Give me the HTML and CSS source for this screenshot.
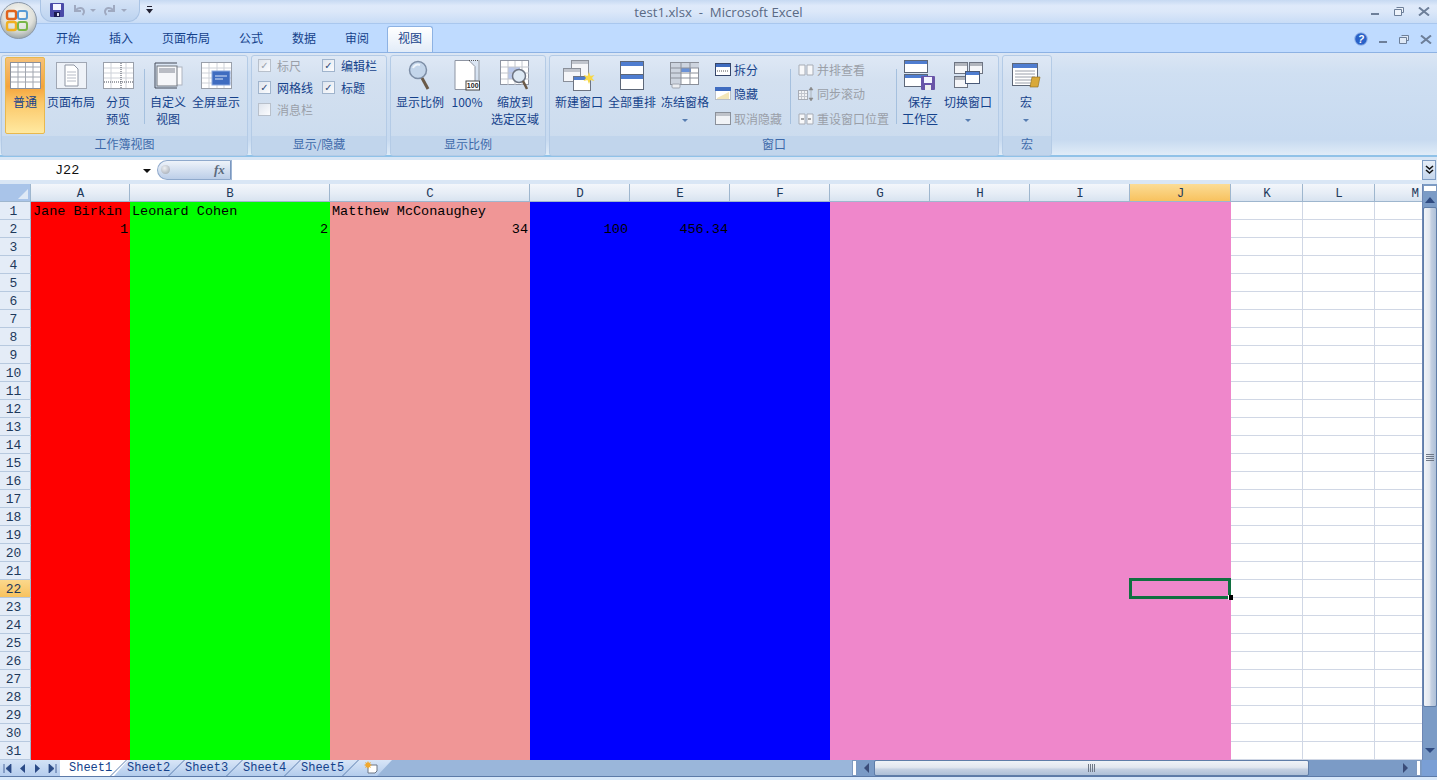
FILE: index.html
```html
<!DOCTYPE html>
<html>
  <head>
    <meta charset="utf-8" />
    <title>test1.xlsx - Microsoft Excel</title>
    <link rel="stylesheet" href="styles.css">
  </head>
  <body>
    <!-- office orb sits over the title bar and the tab row -->
    <div class="orb">
      <svg width="37" height="37" viewBox="0 0 37 37">
        <defs>
          <radialGradient id="orbfill" cx="50%" cy="35%" r="70%">
            <stop offset="0" stop-color="#fbfbf8" />
            <stop offset="0.6" stop-color="#dfe0da" />
            <stop offset="1" stop-color="#8f9a9c" />
          </radialGradient>
        </defs>
        <circle cx="18.5" cy="18.5" r="18" fill="url(#orbfill)" stroke="#8a97a8" />
        <rect x="7" y="9" width="9" height="8" rx="2" fill="none" stroke="#e0641c" stroke-width="2.4" />
        <rect x="18" y="9" width="9" height="8" rx="2" fill="none" stroke="#5a9bd5" stroke-width="2" />
        <rect x="7" y="20" width="9" height="8" rx="2" fill="none" stroke="#f0b020" stroke-width="2.4" />
        <rect x="18" y="20" width="9" height="8" rx="2" fill="none" stroke="#7ab648" stroke-width="2" />
      </svg>
    </div>

    <div class="titlebar">
      <div class="qat">
        <svg width="14" height="14" viewBox="0 0 14 14">
          <rect width="14" height="14" rx="1" fill="#4a4aa8" />
          <rect x="3" y="1" width="8" height="6" fill="#f4f4ff" />
          <rect x="4" y="9" width="6" height="5" fill="#1c1c50" />
          <rect x="7" y="10" width="2" height="3" fill="#dfe0ee" />
        </svg>
        <svg class="undo" width="14" height="14" viewBox="0 0 14 14">
          <path d="M3 2v6h6M3.5 7.5C6 4 11 4 12 8c.3 1.500-.5 3-1.500 4" fill="none" stroke="#9fa9c0" stroke-width="2" />
        </svg>
        <span class="qat-caret"></span>
        <svg class="redo" width="14" height="14" viewBox="0 0 14 14">
          <path d="M11 2v6H5M10.500 7.500C8 4 3 4 2 8c-.3 1.500.5 3 1.500 4" fill="none" stroke="#9fa9c0" stroke-width="2" />
        </svg>
        <span class="qat-caret"></span>
      </div>
      <svg class="qat-more" width="7" height="8" viewBox="0 0 7 8">
        <path d="M1 .5h5" stroke="#223" />
        <path d="M0 3h7L3.500 7.500z" fill="#223" />
      </svg>
      <div class="doc-title">test1.xlsx&nbsp; - &nbsp;Microsoft Excel</div>
      <div class="winctl">
        <svg width="9" height="9" viewBox="0 0 9 9"><rect y="6" width="8" height="2" fill="#6d7f99" /></svg>
        <svg width="10" height="9" viewBox="0 0 10 9"><path d="M2.500 .5h7v5h-2M.5 2.500h7v6h-7z" fill="#eef3fa" stroke="#6d7f99" /></svg>
        <svg width="12" height="9" viewBox="0 0 12 9"><path d="M1 .5l10 8M11 .5l-10 8" stroke="#6d7f99" stroke-width="2" /></svg>
      </div>
    </div>

    <div class="tabrow">
      <div class="tab">开始</div>
      <div class="tab">插入</div>
      <div class="tab">页面布局</div>
      <div class="tab">公式</div>
      <div class="tab">数据</div>
      <div class="tab">审阅</div>
      <div class="tab active">视图</div>
      <div class="docctl">
        <svg width="14" height="14" viewBox="0 0 14 14">
          <circle cx="7" cy="7" r="6.300" fill="#2a62c8" stroke="#9dbcec" />
          <text x="7" y="10.500" class="help-mark">?</text>
        </svg>
        <svg width="9" height="9" viewBox="0 0 9 9"><rect y="6" width="8" height="2" fill="#6d7f99" /></svg>
        <svg width="10" height="9" viewBox="0 0 10 9"><path d="M2.500 .5h7v5h-2M.5 2.500h7v6h-7z" fill="#dfe9f6" stroke="#6d7f99" /></svg>
        <svg width="12" height="9" viewBox="0 0 12 9"><path d="M1 .5l10 8M11 .5l-10 8" stroke="#6d7f99" stroke-width="2" /></svg>
      </div>
    </div>

    <div class="ribbon">
      <!-- workbook views -->
      <div class="group g-views">
        <div class="group-body">
          <div class="lg w40 on">
            <svg class="ico" width="31" height="27" viewBox="0 0 31 27">
              <rect x=".5" y=".5" width="30" height="26" fill="#fff" stroke="#8a8f99" />
              <path d="M1 5h29M1 10h29M1 15h29M1 20h29M8 1v25M15.500 1v25M23 1v25" stroke="#a2a7b0" />
            </svg>
            <span class="lbl">普通</span>
          </div>
          <div class="lg w52">
            <svg class="ico" width="31" height="27" viewBox="0 0 31 27">
              <rect x=".5" y=".5" width="30" height="26" fill="#eef2f8" stroke="#a0a7b4" />
              <path d="M9 3h9l4 4v17H9z" fill="#fff" stroke="#8e95a3" />
              <path d="M11 10h9M11 13h9M11 16h9M11 19h9" stroke="#b6bbc6" />
            </svg>
            <span class="lbl">页面布局</span>
          </div>
          <div class="lg w42">
            <svg class="ico" width="31" height="27" viewBox="0 0 31 27">
              <rect x=".5" y=".5" width="30" height="26" fill="#fff" stroke="#9aa0ab" />
              <path d="M1 6h29M1 11h29M1 16h29M8 1v25M23 1v25" stroke="#ced2d9" />
              <path d="M18 1v25M1 20h29" stroke="#444a58" stroke-dasharray="1 1" />
            </svg>
            <span class="lbl">分页<br />预览</span>
          </div>
          <div class="sep"></div>
          <div class="lg w44">
            <svg class="ico" width="31" height="27" viewBox="0 0 31 27">
              <path d="M2 1h22M2 26h22M2 1v25" stroke="#444a58" fill="none" />
              <rect x="20" y="5" width="9" height="18" fill="#fbfbfd" stroke="#aeb4bf" />
              <rect x="4" y="4" width="20" height="20" fill="#f5f6f9" stroke="#70767f" />
              <rect x="6" y="6" width="16" height="5" fill="#b9bcc4" />
            </svg>
            <span class="lbl">自定义<br />视图</span>
          </div>
          <div class="lg w52">
            <svg class="ico" width="31" height="27" viewBox="0 0 31 27">
              <rect x=".5" y=".5" width="30" height="26" fill="#fff" stroke="#9aa0ab" />
              <path d="M1 6h29M1 11h29M1 16h29M1 21h29M8 1v25M16 1v25M23 1v25" stroke="#ced2d9" />
              <rect x="11" y="9" width="18" height="14" fill="#3f6cc0" stroke="#8aa7de" />
              <path d="M14 14h12M14 17h8" stroke="#dbe6fa" />
            </svg>
            <span class="lbl">全屏显示</span>
          </div>
        </div>
        <div class="group-name">工作簿视图</div>
      </div>

      <!-- show / hide -->
      <div class="group g-show">
        <div class="group-body checks">
          <div class="check-col">
            <div class="check off"><span class="box tick">✓</span>标尺</div>
            <div class="check"><span class="box tick">✓</span>网格线</div>
            <div class="check off"><span class="box"></span>消息栏</div>
          </div>
          <div class="check-col">
            <div class="check"><span class="box tick">✓</span>编辑栏</div>
            <div class="check"><span class="box tick">✓</span>标题</div>
          </div>
        </div>
        <div class="group-name">显示/隐藏</div>
      </div>

      <!-- zoom -->
      <div class="group g-zoom">
        <div class="group-body">
          <div class="lg w50">
            <svg class="ico" width="24" height="31" viewBox="0 0 24 31">
              <circle cx="10" cy="10" r="8.500" fill="#c3d5ea" stroke="#7d8ea6" stroke-width="1.500" />
              <path d="M5 8c1-3 4-4 7-3" stroke="#eef4fb" stroke-width="2" fill="none" />
              <path d="M14 18l6 11" stroke="#6b5a48" stroke-width="3" />
            </svg>
            <span class="lbl">显示比例</span>
          </div>
          <div class="lg w44">
            <svg class="ico" width="26" height="31" viewBox="0 0 26 31">
              <path d="M1 .5h14l6 6v23H1z" fill="#fff" stroke="#8e95a3" />
              <path d="M15 .5h10v20" fill="none" stroke="#555" stroke-dasharray="1 1" />
              <rect x="12" y="21" width="13.500" height="9" fill="#fff" stroke="#444" />
              <text x="18.700" y="28.300" class="ico-num">100</text>
            </svg>
            <span class="lbl">100%</span>
          </div>
          <div class="lg w52">
            <svg class="ico" width="30" height="31" viewBox="0 0 30 31">
              <rect x=".5" y=".5" width="28" height="24" fill="#fff" stroke="#8e95a3" />
              <rect x="8" y="7" width="12" height="12" fill="#b8c8ec" />
              <path d="M1 7h28M1 13h28M1 19h28M8 1v24M15 1v24M22 1v24" stroke="#c2c6ce" />
              <circle cx="19" cy="16" r="6.500" fill="#dce8f4" stroke="#6d7482" stroke-width="1.500" />
              <path d="M23 21l4 8" stroke="#6b5a48" stroke-width="2.500" />
            </svg>
            <span class="lbl">缩放到<br />选定区域</span>
          </div>
        </div>
        <div class="group-name">显示比例</div>
      </div>

      <!-- window -->
      <div class="group g-window">
        <div class="group-body">
          <div class="lg w52">
            <svg class="ico" width="32" height="31" viewBox="0 0 32 31">
              <rect x="8.500" y=".5" width="17" height="18" fill="#f5f6f9" stroke="#8a8f99" />
              <rect x="9" y="1" width="16" height="3" fill="#c1c5cd" />
              <rect x=".5" y="8.500" width="17" height="13" fill="#f5f6f9" stroke="#8a8f99" />
              <rect x="1" y="9" width="16" height="3" fill="#c1c5cd" />
              <rect x="10.500" y="16.500" width="17" height="14" fill="#fff" stroke="#6d7482" />
              <rect x="11" y="17" width="16" height="3" fill="#4f7dd0" />
              <path d="M26 12l1.500 4 4-1-2.500 3 2.500 3-4-1-1.500 4-1.500-4-4 1 2.500-3-2.500-3 4 1z" fill="#f7d84a" />
            </svg>
            <span class="lbl">新建窗口</span>
          </div>
          <div class="lg w54">
            <svg class="ico" width="24" height="29" viewBox="0 0 24 29">
              <rect x=".5" y=".5" width="23" height="28" fill="#fff" stroke="#5d6778" />
              <rect x="1" y="1" width="22" height="4" fill="#4f7dd0" />
              <rect x="1" y="14" width="22" height="4" fill="#4f7dd0" />
              <path d="M0 13.500h24" stroke="#5d6778" />
            </svg>
            <span class="lbl">全部重排</span>
          </div>
          <div class="lg w52">
            <svg class="ico" width="30" height="27" viewBox="0 0 30 27">
              <rect x=".5" y=".5" width="28" height="22" fill="#fff" stroke="#8a8f99" />
              <rect x="1" y="1" width="10" height="21" fill="#cdd4df" />
              <rect x="11" y="1" width="18" height="5" fill="#cdd4df" />
              <rect x="11" y="6" width="10" height="4" fill="#6a92d8" />
              <path d="M1 6h28M1 11h28M1 16h28M11 1v21M20 1v21" stroke="#8a8f99" />
              <rect x="2" y="22" width="8" height="4" rx="1" fill="#eceef2" stroke="#a0a6b0" />
            </svg>
            <span class="lbl">冻结窗格</span>
            <span class="caret-row"><span class="caret"></span></span>
          </div>
          <div class="small-col first">
            <div class="small">
              <svg width="16" height="13" viewBox="0 0 16 13">
                <rect x=".5" y=".5" width="15" height="12" fill="#fff" stroke="#36466a" />
                <rect x="1" y="1" width="14" height="3" fill="#3f6cc0" />
                <path d="M2 8h12" stroke="#555" stroke-dasharray="1 1" />
              </svg>
              <span>拆分</span>
            </div>
            <div class="small">
              <svg width="16" height="13" viewBox="0 0 16 13">
                <rect x=".5" y=".5" width="15" height="12" fill="#fff" stroke="#8a8f99" stroke-dasharray="1 1" />
                <rect x="0" y="0" width="16" height="4" fill="#3f6cc0" />
                <path d="M2 11L14 5v7H2z" fill="#f3e6b8" />
              </svg>
              <span>隐藏</span>
            </div>
            <div class="small off">
              <svg width="16" height="13" viewBox="0 0 16 13">
                <rect x=".5" y=".5" width="15" height="12" fill="#f1f3f6" stroke="#8a909a" />
                <rect x="1" y="1" width="14" height="3" fill="#bfc3ca" />
              </svg>
              <span>取消隐藏</span>
            </div>
          </div>
          <div class="sep wide"></div>
          <div class="small-col">
            <div class="small off">
              <svg width="16" height="13" viewBox="0 0 16 13">
                <path d="M1 2h6v10H1zM9 2h6v10H9z" fill="#f7f8fa" stroke="#a7acb5" />
              </svg>
              <span>并排查看</span>
            </div>
            <div class="small off">
              <svg width="16" height="14" viewBox="0 0 16 14">
                <rect x=".5" y="3.500" width="9" height="9" fill="#f1f3f6" stroke="#a7acb5" />
                <path d="M3.500 4v8M6.500 4v8M1 6.500h8M1 9.500h8" stroke="#c2c6ce" />
                <path d="M13 0l2 3h-4zM13 14l2-3h-4zM13 3v8" fill="#888" stroke="#888" stroke-width=".5" />
              </svg>
              <span>同步滚动</span>
            </div>
            <div class="small off">
              <svg width="16" height="13" viewBox="0 0 16 13">
                <path d="M1 2h6v10H1zM9 2h6v10H9z" fill="#f7f8fa" stroke="#a7acb5" />
                <path d="M3 7h3M10 7h3" stroke="#555" />
              </svg>
              <span>重设窗口位置</span>
            </div>
          </div>
          <div class="sep wide"></div>
          <div class="lg w46">
            <svg class="ico" width="32" height="31" viewBox="0 0 32 31">
              <rect x=".5" y=".5" width="23" height="12" fill="#fff" stroke="#5d6778" />
              <rect x="1" y="1" width="22" height="3" fill="#4f7dd0" />
              <rect x=".5" y="14.500" width="23" height="12" fill="#fff" stroke="#5d6778" />
              <rect x="1" y="15" width="22" height="3" fill="#4f7dd0" />
              <rect x="17" y="16" width="14" height="14" rx="1" fill="#6a55a8" />
              <rect x="20" y="17" width="8" height="6" fill="#f4f4ff" />
              <rect x="21" y="25" width="6" height="5" fill="#eee" />
            </svg>
            <span class="lbl">保存<br />工作区</span>
          </div>
          <div class="lg w50">
            <svg class="ico" width="29" height="27" viewBox="0 0 29 27">
              <rect x=".5" y=".5" width="13" height="11" fill="#f5f6f9" stroke="#6d7482" />
              <rect x="1" y="1" width="12" height="3" fill="#b1b5bd" />
              <rect x="15.500" y=".5" width="13" height="11" fill="#f5f6f9" stroke="#6d7482" />
              <rect x="16" y="1" width="12" height="3" fill="#b1b5bd" />
              <rect x=".5" y="14.500" width="13" height="11" fill="#f5f6f9" stroke="#6d7482" />
              <rect x="1" y="15" width="12" height="3" fill="#b1b5bd" />
              <rect x="11.500" y="9.500" width="14" height="12" fill="#fff" stroke="#4a5a78" />
              <rect x="12" y="10" width="13" height="3" fill="#4f7dd0" />
            </svg>
            <span class="lbl">切换窗口</span>
            <span class="caret-row"><span class="caret"></span></span>
          </div>
        </div>
        <div class="group-name">窗口</div>
      </div>

      <!-- macros -->
      <div class="group g-macro">
        <div class="group-body">
          <div class="lg w46">
            <svg class="ico macro" width="29" height="25" viewBox="0 0 29 25">
              <rect x=".5" y=".5" width="25" height="22" fill="#fff" stroke="#5d6778" />
              <rect x="1" y="1" width="24" height="4" fill="#4f7dd0" />
              <path d="M3 8h20M3 11h20M3 14h20M3 17h20M3 20h18" stroke="#9aa0ab" />
              <path d="M20 14h8l-2 10h-8z" fill="#d9a93a" stroke="#8a6a1c" stroke-width=".6" />
            </svg>
            <span class="lbl">宏</span>
            <span class="caret-row"><span class="caret"></span></span>
          </div>
        </div>
        <div class="group-name">宏</div>
      </div>
    </div>

    <div class="formula-bar">
      <div class="namebox">J22<span class="name-caret"></span></div>
      <div class="fx-pill">
        <span class="fx-knob"></span>
        <span class="fx">fx</span>
      </div>
      <div class="formula-input"></div>
      <div class="formula-more">
        <svg width="9" height="10" viewBox="0 0 9 10">
          <path d="M1 1l3.500 3L8 1M1 5l3.500 3L8 5" fill="none" stroke="#111" stroke-width="1.600" />
        </svg>
      </div>
    </div>

    <div class="main">
      <div class="sheet">
        <div class="row-heads">
          <div class="corner"></div>
          <div class="rh">1</div><div class="rh">2</div><div class="rh">3</div><div class="rh">4</div>
          <div class="rh">5</div><div class="rh">6</div><div class="rh">7</div><div class="rh">8</div>
          <div class="rh">9</div><div class="rh">10</div><div class="rh">11</div><div class="rh">12</div>
          <div class="rh">13</div><div class="rh">14</div><div class="rh">15</div><div class="rh">16</div>
          <div class="rh">17</div><div class="rh">18</div><div class="rh">19</div><div class="rh">20</div>
          <div class="rh">21</div><div class="rh sel">22</div><div class="rh">23</div><div class="rh">24</div>
          <div class="rh">25</div><div class="rh">26</div><div class="rh">27</div><div class="rh">28</div>
          <div class="rh">29</div><div class="rh">30</div><div class="rh">31</div>
        </div>
        <div class="col col-a red">
          <div class="ch">A</div>
          <div class="cell">Jane Birkin</div>
          <div class="cell num">1</div>
        </div>
        <div class="col col-wide green">
          <div class="ch">B</div>
          <div class="cell">Leonard Cohen</div>
          <div class="cell num">2</div>
        </div>
        <div class="col col-wide salmon">
          <div class="ch">C</div>
          <div class="cell">Matthew McConaughey</div>
          <div class="cell num">34</div>
        </div>
        <div class="col blue">
          <div class="ch">D</div>
          <div class="cell"></div>
          <div class="cell num">100</div>
        </div>
        <div class="col blue">
          <div class="ch">E</div>
          <div class="cell"></div>
          <div class="cell num">456.34</div>
        </div>
        <div class="col blue">
          <div class="ch">F</div>
        </div>
        <div class="col pink"><div class="ch">G</div></div>
        <div class="col pink"><div class="ch">H</div></div>
        <div class="col pink"><div class="ch">I</div></div>
        <div class="col col-j pink"><div class="ch sel">J</div></div>
        <div class="col col-k blank"><div class="ch">K</div></div>
        <div class="col col-k blank"><div class="ch">L</div></div>
        <div class="col col-m blank"><div class="ch">M</div></div>
        <!-- selected cell J22 -->
        <div class="selection"><span class="handle"></span></div>
      </div>
      <div class="vscroll">
        <div class="v-split"></div>
        <div class="v-up"><span class="tri-up"></span></div>
        <div class="v-thumb"><span class="grip"></span></div>
        <div class="v-track"><span class="tri-down"></span></div>
      </div>
    </div>

    <div class="bottom">
      <div class="tab-nav">
        <svg width="9" height="9" viewBox="0 0 9 9"><path d="M1 0v9M8 0v9L3 4.500z" fill="#2b4a86" stroke="#2b4a86" stroke-width=".8" /></svg>
        <svg width="6" height="9" viewBox="0 0 6 9"><path d="M5 0v9L0 4.500z" fill="#2b4a86" /></svg>
        <svg width="6" height="9" viewBox="0 0 6 9"><path d="M1 0v9l5-4.500z" fill="#2b4a86" /></svg>
        <svg width="9" height="9" viewBox="0 0 9 9"><path d="M8 0v9M1 0v9l5-4.500z" fill="#2b4a86" stroke="#2b4a86" stroke-width=".8" /></svg>
      </div>
      <div class="sheet-tabs">
        <div class="stab current">Sheet1</div>
        <div class="stab">Sheet2</div>
        <div class="stab">Sheet3</div>
        <div class="stab">Sheet4</div>
        <div class="stab">Sheet5</div>
        <div class="stab new">
          <svg width="14" height="13" viewBox="0 0 14 13">
            <path d="M4 4h9v6l-2 2H4z" fill="#fff" stroke="#6c7686" />
            <path d="M4 0l1 2 2-1-1 2 2 1-2 1 1 2-2-1-1 2-1-2-2 1 1-2-2-1 2-1-1-2 2 1z" fill="#f0a830" />
          </svg>
        </div>
      </div>
      <div class="h-gap"></div>
      <div class="h-scroll">
        <span class="h-split"></span>
        <span class="h-btn"><span class="tri-left"></span></span>
        <span class="h-thumb"><span class="grip-h"></span></span>
        <span class="h-rest"><span class="tri-right"></span><span class="h-split right"></span></span>
      </div>
      <div class="h-corner"></div>
    </div>
    <div class="statusbar"></div>
  </body>
</html>
```

FILE: styles.css
```css
html,
body {
  margin: 0;
  padding: 0;
  width: 1437px;
  height: 780px;
  overflow: hidden;
  background: #bfdbff;
  font-family: "Noto Sans CJK SC", "Liberation Sans", sans-serif;
  font-size: 12px;
}

.orb {
  position: absolute;
  left: 0;
  top: 2px;
  width: 37px;
  height: 37px;
  z-index: 2;
}

/* title bar */
.titlebar {
  height: 23px;
  border-bottom: 1px solid #a9c7ee;
  background: linear-gradient(180deg, #c6d9f2 0%, #dfeafa 25%, #dce8f9 50%, #c8dcf6 100%);
  display: flex;
  align-items: center;
  position: relative;
}

.qat {
  margin-left: 40px;
  width: 100px;
  height: 22px;
  margin-top: -2px;
  box-sizing: border-box;
  padding-left: 9px;
  display: flex;
  align-items: center;
  gap: 4px;
  background: linear-gradient(180deg, #d5e3f6, #bcd3f0);
  border: 1px solid #a9c3e4;
  border-top: 0;
  border-radius: 0 0 12px 12px;
}

.undo {
  margin-left: 4px;
}

.redo {
  margin-left: 3px;
}

.qat-caret {
  width: 0;
  height: 0;
  border: 3px solid transparent;
  border-top: 3px solid #9fa9c0;
  border-bottom: 0;
}

.qat-more {
  margin-left: 6px;
  margin-top: -3px;
}

.doc-title {
  position: absolute;
  left: 0;
  right: 0;
  text-align: center;
  font-family: "Open Sans", "Liberation Sans", sans-serif;
  font-size: 13.200px;
  color: #5a6a85;
  line-height: 24px;
}

.winctl {
  margin-left: auto;
  display: flex;
  align-items: center;
  gap: 14px;
  padding-right: 7px;
  position: relative;
}

/* tab row */
.tabrow {
  height: 28px;
  box-sizing: border-box;
  padding-left: 42px;
  display: flex;
  gap: 1px;
  align-items: flex-end;
  background: #bfdbff;
  position: relative;
}

.tab {
  height: 25px;
  line-height: 22px;
  padding: 0 14px;
  color: #15428b;
  font-size: 12px;
}

.tab.active {
  margin: 0 3px;
  padding: 0 10px;
  border: 1px solid #8db2e3;
  border-bottom: 0;
  border-radius: 3px 3px 0 0;
  background: linear-gradient(180deg, #fff, #e2ecf8);
}

.docctl {
  margin-left: auto;
  align-self: center;
  display: flex;
  align-items: center;
  gap: 11px;
  padding-right: 5px;
  margin-top: 2px;
}

.help-mark {
  font-family: "Liberation Sans", sans-serif;
  font-size: 10px;
  font-weight: bold;
  font-style: italic;
  fill: #fff;
  text-anchor: middle;
}

.ico-num {
  font-family: "Liberation Sans", sans-serif;
  font-size: 7px;
  font-weight: bold;
  fill: #222;
  text-anchor: middle;
}

/* ribbon */
.ribbon {
  height: 105px;
  box-sizing: border-box;
  padding: 2px 0 0 1px;
  display: flex;
  gap: 3px;
  border-top: 1px solid #8db2e3;
  background: linear-gradient(180deg, #dbe6f4 0%, #cfdff2 20%, #c7daf0 85%, #e0ecf8 100%);
  border-bottom: 2px solid #90c2e8;
}

.group {
  height: 101px;
  box-sizing: border-box;
  border: 1px solid #b4cbe6;
  border-radius: 3px;
  display: flex;
  flex-direction: column;
  background: linear-gradient(180deg, #dee8f5 0%, #d3e0f0 25%, #cadbee 100%);
  overflow: hidden;
}

.g-views {
  width: 247px;
}

.g-show {
  width: 136px;
}

.g-zoom {
  width: 156px;
}

.g-window {
  width: 450px;
}

.g-macro {
  width: 50px;
}

.group-body {
  flex: 1;
  display: flex;
  padding: 1px 0 0 3px;
  min-height: 0;
}

.g-zoom .group-body {
  padding-left: 4px;
}

.g-macro .group-body {
  padding-left: 0;
}

.group-name {
  height: 19px;
  line-height: 16px;
  text-align: center;
  color: #3e6aaa;
  background: #c1d5ec;
  font-size: 12px;
}

.lg {
  box-sizing: border-box;
  height: 77px;
  padding-top: 3px;
  display: flex;
  flex-direction: column;
  align-items: center;
  flex-shrink: 0;
  color: #15428b;
  text-align: center;
}

.lg .ico {
  height: 31px;
  display: block;
}

.lg .lbl {
  line-height: 17px;
  margin-top: 2px;
  white-space: nowrap;
}

.lg.on {
  border: 1px solid #e8b84e;
  border-radius: 2px;
  padding-top: 2px;
  background: linear-gradient(180deg, #f6c27a 0%, #f5a43c 38%, #fbc86a 60%, #ffe9a0 100%);
}

.w40 {
  width: 40px;
}

.w42 {
  width: 42px;
}

.w44 {
  width: 44px;
}

.w46 {
  width: 46px;
}

.w50 {
  width: 50px;
}

.w52 {
  width: 52px;
}

.w54 {
  width: 54px;
}

.sep {
  width: 1px;
  height: 55px;
  margin: 12px 1px 0 5px;
  flex-shrink: 0;
  background: #a5c0de;
}

.sep.wide {
  margin: 12px 0 0 7px;
}

.caret-row {
  height: 17px;
  margin-top: 2px;
  display: flex;
  align-items: center;
}

.caret {
  width: 0;
  height: 0;
  border: 3px solid transparent;
  border-top: 3px solid #567db1;
  border-bottom: 0;
}

/* check boxes */
.checks {
  padding: 0 0 0 6px;
}

.check-col {
  width: 65px;
  margin-top: -2px;
}

.check {
  height: 22px;
  display: flex;
  align-items: center;
  gap: 6px;
  color: #15428b;
  white-space: nowrap;
}

.check.off {
  color: #9a9fa8;
}

.box {
  width: 11px;
  height: 11px;
  border: 1px solid #a0b4cc;
  background: linear-gradient(135deg, #dfe5ee, #fbfcfe);
  font: bold 10px/11px "DejaVu Sans", sans-serif;
  text-align: center;
  color: #2c4a78;
}

.check.off .box {
  border-color: #b8c0cb;
  color: #9aa2ad;
}

/* small buttons */
.small-col {
  width: 91px;
  margin-left: 7px;
  flex-shrink: 0;
}

.small-col.first {
  width: 68px;
  margin-left: 4px;
}

.small {
  height: 24.500px;
  display: flex;
  align-items: center;
  gap: 3px;
  color: #15428b;
  white-space: nowrap;
}

.small svg {
  flex-shrink: 0;
}

.small.off {
  color: #9a9fa8;
}

/* formula bar */
.formula-bar {
  height: 27px;
  box-sizing: border-box;
  padding: 3px 1px 0 0;
  display: flex;
  background: #d9e6f5;
}

.namebox {
  width: 155px;
  height: 20px;
  box-sizing: border-box;
  padding-left: 55px;
  position: relative;
  line-height: 22px;
  background: #fff;
  font-family: "Liberation Mono", monospace;
  font-size: 13.500px;
  color: #111;
}

.name-caret {
  position: absolute;
  left: 143px;
  top: 9px;
  border: 4px solid transparent;
  border-top: 4px solid #111;
  border-bottom: 0;
}

.fx-pill {
  width: 76px;
  height: 20px;
  box-sizing: border-box;
  position: relative;
  padding-left: 2px;
  background: #fff;
}

.fx-pill::before {
  content: "";
  position: absolute;
  left: 2px;
  top: 0;
  right: 0;
  bottom: 0;
  border: 1px solid #8fa9cc;
  border-right: 1px solid #7b97bf;
  border-radius: 10px 0 0 10px;
  background: linear-gradient(180deg, #eef3fa, #bccee8);
}

.fx-knob {
  position: absolute;
  left: 6px;
  top: 5px;
  width: 9px;
  height: 9px;
  border-radius: 50%;
  background: radial-gradient(circle at 40% 35%, #eef0f3, #9ba3ae);
}

.fx {
  position: absolute;
  left: 59px;
  top: 0;
  line-height: 19px;
  font-family: "Liberation Serif", serif;
  font-style: italic;
  font-weight: bold;
  font-size: 13px;
  color: #5c6a7c;
}

.formula-input {
  flex: 1;
  height: 20px;
  background: #fff;
  border-left: 1px solid #9eb6d4;
}

.formula-more {
  width: 14px;
  height: 20px;
  box-sizing: border-box;
  border: 1px solid #7f9dc4;
  background: linear-gradient(180deg, #e6eef8, #c5d6ec);
  display: flex;
  align-items: center;
  justify-content: center;
}

/* sheet */
.main {
  height: 576px;
  display: flex;
}

.sheet {
  width: 1422px;
  height: 576px;
  display: flex;
  position: relative;
  overflow: hidden;
  font-family: "Liberation Mono", monospace;
  font-size: 13.500px;
  color: #000;
  background: #fff;
}

.row-heads {
  width: 31px;
  flex-shrink: 0;
  background: #e4ecf7;
}

.corner {
  height: 18px;
  box-sizing: border-box;
  border-right: 1px solid #9eb6ce;
  border-bottom: 1px solid #9eb6ce;
  background: #a9c4e9;
  position: relative;
}

.corner::after {
  content: "";
  position: absolute;
  right: 2px;
  bottom: 2px;
  border-left: 10px solid transparent;
  border-bottom: 10px solid #dfe9f6;
}

.rh {
  height: 18px;
  box-sizing: border-box;
  border-right: 1px solid #9eb6ce;
  border-bottom: 1px solid #b7c9df;
  line-height: 20px;
  text-align: center;
  color: #1e395b;
  padding-right: 3px;
  font-size: 13px;
}

.rh.sel {
  background: linear-gradient(180deg, #fbd88c, #f8c25e);
}

.col {
  width: 100px;
  flex-shrink: 0;
  height: 576px;
}

.col-a {
  width: 99px;
}

.col-wide {
  width: 200px;
}

.col-j {
  width: 101px;
}

.col-k {
  width: 72px;
}

.col-m {
  width: 47px;
}

.ch {
  height: 18px;
  box-sizing: border-box;
  padding-left: 1px;
  border-right: 1px solid #9eb6ce;
  border-bottom: 1px solid #9eb6ce;
  background: linear-gradient(180deg, #f3f6fb 0%, #e6edf6 55%, #d8e3f0 100%);
  line-height: 21px;
  text-align: center;
  color: #1e395b;
  font-size: 12.500px;
}

.ch.sel {
  background: linear-gradient(180deg, #fbdc96, #f8c25e);
}

.col-m .ch {
  border-right: 0;
  text-align: right;
  padding-right: 3px;
}

.cell {
  height: 18px;
  line-height: 20px;
  padding: 0 2px;
  white-space: nowrap;
  overflow: hidden;
}

.cell.num {
  text-align: right;
}

.red {
  background: #ff0000;
}

.green {
  background: #00ff00;
}

.salmon {
  background: #f09696;
}

.blue {
  background: #0000ff;
}

.pink {
  background: #ef87cb;
}

.blank {
  background: repeating-linear-gradient(180deg, #fff 0, #fff 17px, #d0d7e5 17px, #d0d7e5 18px);
  box-shadow: inset -1px 0 0 #d0d7e5;
}

.col-m {
  box-shadow: none;
}

.selection {
  position: absolute;
  left: 1129px;
  top: 394px;
  width: 102px;
  height: 21px;
  box-sizing: border-box;
  border: 3px solid #107040;
}

.handle {
  position: absolute;
  right: -5px;
  bottom: -4px;
  width: 5px;
  height: 5px;
  background: #000;
  border-left: 1px solid #fff;
  box-sizing: border-box;
}

/* vertical scroll bar */
.vscroll {
  width: 15px;
  height: 576px;
  box-sizing: border-box;
  border-left: 1px solid #6d86b4;
  display: flex;
  flex-direction: column;
  background: #7b9bc6;
}

.v-split {
  height: 7px;
  box-sizing: border-box;
  margin-top: 1px;
  border: 1px solid #7d99c0;
  background: #fff;
}

.v-up {
  height: 15px;
  display: flex;
  align-items: center;
  justify-content: center;
}

.tri-up {
  border: 5px solid transparent;
  border-bottom: 6px solid #2f4a80;
  border-top: 0;
}

.v-thumb {
  height: 500px;
  box-sizing: border-box;
  border: 1px solid #5f7da8;
  border-radius: 2px;
  background: linear-gradient(90deg, #f0f3f8 0%, #e2e7ef 45%, #c4d0e2 60%, #aec0d8 100%);
  display: flex;
  align-items: center;
  justify-content: center;
}

.grip {
  width: 8px;
  height: 7px;
  background: repeating-linear-gradient(180deg, #6f7887 0, #6f7887 1px, transparent 1px, transparent 2px);
}

.v-track {
  flex: 1;
  display: flex;
  align-items: flex-end;
  justify-content: center;
  padding-bottom: 7px;
}

.tri-down {
  border: 5px solid transparent;
  border-top: 5px solid #2f4a80;
  border-bottom: 0;
}

/* sheet tabs and horizontal scroll bar */
.bottom {
  height: 16px;
  display: flex;
  border-bottom: 1px solid #5c7aa8;
  border-top: 1px solid #a9c2e2;
  margin-top: -1px;
  background: #9ab6da;
}

.tab-nav {
  width: 60px;
  flex-shrink: 0;
  box-sizing: border-box;
  padding: 0 3px;
  display: flex;
  align-items: center;
  justify-content: space-between;
  background: linear-gradient(180deg, #d3e2f6, #b5cdee);
}

.sheet-tabs {
  width: 332px;
  flex-shrink: 0;
  display: flex;
  clip-path: polygon(0 0, 100% 0, calc(100% - 15px) 100%, 0 100%);
  background: linear-gradient(180deg, #d8e5f7, #b3ccec);
}

.stab {
  width: 58px;
  flex-shrink: 0;
  box-sizing: border-box;
  padding-left: 9px;
  line-height: 17px;
  font-family: "Liberation Mono", monospace;
  font-size: 12px;
  color: #15428b;
  position: relative;
}

.stab::before {
  content: "";
  position: absolute;
  left: 0;
  top: 0;
  bottom: 0;
  width: 1px;
  background: #5f80b0;
  transform: skewX(-45deg);
}

.stab.current {
  background: #fff;
  clip-path: polygon(0 0, 100% 0, calc(100% - 14px) 100%, 0 100%);
  width: 68px;
  margin-right: -10px;
}

.stab.current::before {
  display: none;
}

.stab.new {
  width: 42px;
  padding: 1px 0 0 14px;
}

.h-gap {
  flex: 1;
}

.h-scroll {
  width: 570px;
  flex-shrink: 0;
  display: flex;
  align-items: stretch;
  background: #7b9bc6;
}

.h-split {
  width: 5px;
  margin: 0 1px 0 0;
  background: #fff;
  border: 1px solid #7d99c0;
  box-sizing: border-box;
}

.h-btn {
  width: 16px;
  display: flex;
  align-items: center;
  justify-content: center;
}

.tri-left {
  border: 5px solid transparent;
  border-right: 5px solid #3a4c78;
  border-left: 0;
}

.h-thumb {
  width: 435px;
  box-sizing: border-box;
  border: 1px solid #5f7da8;
  border-radius: 2px;
  background: linear-gradient(180deg, #f0f3f8 0%, #e2e7ef 45%, #c4d0e2 60%, #aec0d8 100%);
  display: flex;
  align-items: center;
  justify-content: center;
}

.grip-h {
  width: 7px;
  height: 8px;
  background: repeating-linear-gradient(90deg, #6f7887 0, #6f7887 1px, transparent 1px, transparent 2px);
}

.h-rest {
  flex: 1;
  display: flex;
  align-items: center;
  justify-content: flex-end;
  gap: 8px;
}

.tri-right {
  border: 5px solid transparent;
  border-left: 5px solid #3a4c78;
  border-right: 0;
}

.h-split.right {
  height: 16px;
}

.h-corner {
  width: 15px;
  flex-shrink: 0;
  background: #7a9fd5;
}

.statusbar {
  height: 4px;
  background: #d8e8fa;
}
```
